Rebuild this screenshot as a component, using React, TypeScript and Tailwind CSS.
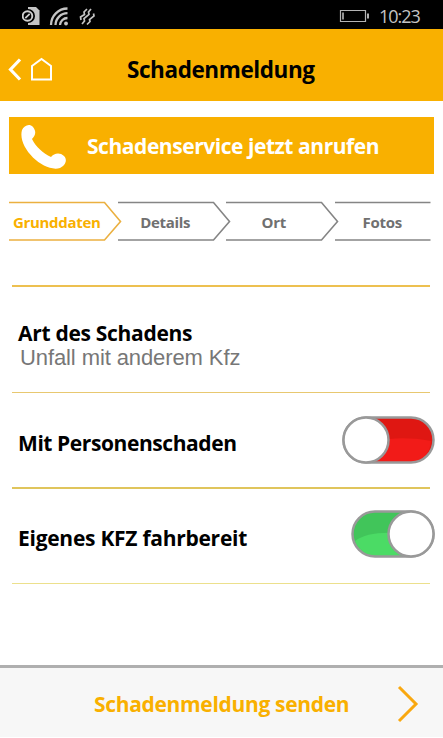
import React, { useState } from 'react';

const StatusBar = () => (
  <div className="h-[29px] bg-black flex items-center justify-between pl-[22px] pr-[22px]">
    <svg width="75" height="20" viewBox="0 0 75 20" fill="none" className="mt-[2px]">
      <path d="M6 1h8l3.500 3.500V19H6z" fill="#c4c4c4" />
      <circle cx="6" cy="10" r="7" fill="#000" />
      <circle cx="5.500" cy="10" r="4.800" stroke="#d0d0d0" strokeWidth="1.900" />
      <path d="M3.300 12.200l4.400-4.400" stroke="#d0d0d0" strokeWidth="1.700" />
      <path d="M29 19A16.500 16.500 0 0 1 45.500 2.500M33.500 19A12 12 0 0 1 45.500 7.200M38 19A7.500 7.500 0 0 1 45.500 12" stroke="#c4c4c4" strokeWidth="2.300" />
      <circle cx="44" cy="17.500" r="1.900" fill="#c4c4c4" />
      <g stroke="#c4c4c4" strokeWidth="1.700">
        <path d="M65 3l-3 3 .5 2.500-4 2.500.5 3" />
        <path d="M69 3l-2.500 3 .5 2.500-5 4 .5 2.500-2.500 3" />
        <path d="M71.500 7.500l.5 2.500-4.500 3.500.5 2-3 3" />
      </g>
    </svg>
    <div className="flex items-center mt-[3px]">
      <svg width="31" height="14" viewBox="0 0 31 14" fill="none">
        <path d="M1.500 1.500h25v11h-25z" stroke="#b4b4b4" strokeWidth="1.200" />
        <path d="M4 3.500v7" stroke="#c4c4c4" strokeWidth="1.500" />
        <path d="M29 4.500v5" stroke="#c4c4c4" strokeWidth="1.800" />
      </svg>
      <span className="ml-[9px] w-[42px] font-['Open_Sans',sans-serif] text-[18px] leading-[20px] tracking-[-1px] text-[#c4c4c4] whitespace-nowrap">10:23</span>
    </div>
  </div>
);

const steps = ['Grunddaten', 'Details', 'Ort', 'Fotos'];

const Steps = ({ current }: { current: number }) => (
  <div className="flex mt-[26px] ml-[9px] h-[41px]">
    {steps.map((label, i) => (
      <div key={label} className={`relative w-[108.500px] shrink-0 h-[41px] ${i === current ? 'text-[#f9b000]' : 'text-[#707070]'}`}>
        <svg width="114" height="41" viewBox="0 0 114 41" fill="none" className="absolute left-0 top-0">
          {i < steps.length - 1 ? (
            <path d="M0 2.500h95.500L111.500 21.500 95.500 40H0" stroke={i === current ? '#ebb040' : '#858585'} strokeWidth="1.600" />
          ) : (
            <path d="M0 2.500h95.500M0 40h95.500" stroke="#858585" strokeWidth="1.600" />
          )}
        </svg>
        <div className="w-[95.500px] text-center text-[15px] leading-[20px] pt-[12px] font-bold tracking-[-0.3px] whitespace-nowrap">{label}</div>
      </div>
    ))}
  </div>
);

const Toggle = ({ on, onChange }: { on: boolean; onChange: () => void }) => (
  <button type="button" role="switch" aria-checked={on} onClick={onChange} className="block cursor-pointer">
    {on ? (
      <svg width="84" height="48" viewBox="0 0 84 48" className="block">
        <rect x="1.500" y="1.500" width="81" height="45" rx="22.500" fill="#41c55a" />
        <path d="M4 31C14 23 32 21 60 24v22H24C14 46 6 40 4 31z" fill="#4bdb65" />
        <rect x="1.500" y="1.500" width="81" height="45" rx="22.500" fill="none" stroke="#999" strokeWidth="2.500" />
        <circle cx="60" cy="24" r="22.500" fill="#fff" stroke="#999" strokeWidth="2.500" />
      </svg>
    ) : (
      <svg width="93" height="48" viewBox="0 0 93 48" className="block">
        <rect x="1.500" y="1.500" width="90" height="45" rx="22.500" fill="#df1712" />
        <path d="M32 25c18-3 35-4 57 0-1 13-9 21-20 21H32z" fill="#f21b18" />
        <rect x="1.500" y="1.500" width="90" height="45" rx="22.500" fill="none" stroke="#999" strokeWidth="2.500" />
        <circle cx="24" cy="24" r="22.500" fill="#fff" stroke="#999" strokeWidth="2.500" />
      </svg>
    )}
  </button>
);

export default function App() {
  const [injured, setInjured] = useState(false);
  const [drivable, setDrivable] = useState(true);

  return (
    <div className="w-[443px] h-[738px] bg-white flex flex-col overflow-hidden font-['Open_Sans','Noto_Sans',sans-serif] text-black">
      <StatusBar />

      <header className="h-[72px] bg-[#f9b000] flex items-center pl-[7px]">
        <svg width="46" height="26" viewBox="0 0 46 26" fill="none" stroke="#fff" className="mt-[9px] shrink-0">
          <path d="M13 2.500L3.500 12.500 13 22.500" strokeWidth="3.200" />
          <path d="M25 9L34.500 2 44 9V22.500H25z" strokeWidth="2" />
        </svg>
        <h1 className="ml-[74px] mt-[9px] text-[22.5px] leading-[30px] font-bold tracking-[-0.42px] whitespace-nowrap">Schadenmeldung</h1>
      </header>

      <button type="button" className="mt-[16px] ml-[9px] w-[425px] h-[57px] shrink-0 bg-[#f9b000] text-white flex items-center">
        <svg width="46" height="46" viewBox="0 0 46 46" className="ml-[12px] mt-[3px] shrink-0">
          <path d="M1 6C3 2 8-1 12 3c4 5 2 9-1 12 4 8 11 14 19 18 3-4 9-5 13-1 4 4 1 10-4 12C23 49-4 24 1 6z" fill="#fff" />
        </svg>
        <span className="ml-[20px] mt-px text-[21px] leading-[30px] font-bold tracking-[-0.45px] whitespace-nowrap">Schadenservice jetzt anrufen</span>
      </button>

      <Steps current={0} />

      <main className="mt-[44px] ml-[12px] w-[418px] grow">
        <div className="h-[107px] border-t-2 border-[#edc050] pl-[6px] pt-[34px]">
          <div className="text-[21px] leading-[25px] font-bold tracking-[-0.3px] whitespace-nowrap">Art des Schadens</div>
          <div className="ml-[2px] font-['Liberation_Sans',sans-serif] text-[22px] leading-[23px] tracking-[-0.1px] text-[#777] whitespace-nowrap">Unfall mit anderem Kfz</div>
        </div>
        <div className="h-[95px] border-t border-[#e8c870] pl-[6px] flex items-center justify-between">
          <span className="mt-[6px] text-[21px] leading-[30px] font-bold tracking-[-0.42px] whitespace-nowrap">Mit Personenschaden</span>
          <div className="mr-[-5px] mt-[-1px]"><Toggle on={injured} onChange={() => setInjured(!injured)} /></div>
        </div>
        <div className="h-[97px] border-t-2 border-b border-t-[#e0c55c] border-b-[#ece08c] pl-[6px] flex items-center justify-between">
          <span className="mt-[4px] text-[21px] leading-[30px] font-bold tracking-[-0.27px] whitespace-nowrap">Eigenes KFZ fahrbereit</span>
          <div className="mr-[-5px] mt-[-4px]"><Toggle on={drivable} onChange={() => setDrivable(!drivable)} /></div>
        </div>
      </main>

      <button type="button" className="h-[72px] mb-px shrink-0 bg-[#f7f7f7] border-t-3 border-[#afafaf] flex items-center text-[#f9b000]">
        <span className="ml-[94px] mt-[2px] w-[302px] text-left text-[21px] leading-[30px] font-bold tracking-[-0.33px] whitespace-nowrap">Schadenmeldung senden</span>
        <svg width="24" height="40" viewBox="0 0 24 40" fill="none" className="mt-[3px]">
          <path d="M3 3l17 17L3 37" stroke="#f9a810" strokeWidth="3" />
        </svg>
      </button>
    </div>
  );
}
